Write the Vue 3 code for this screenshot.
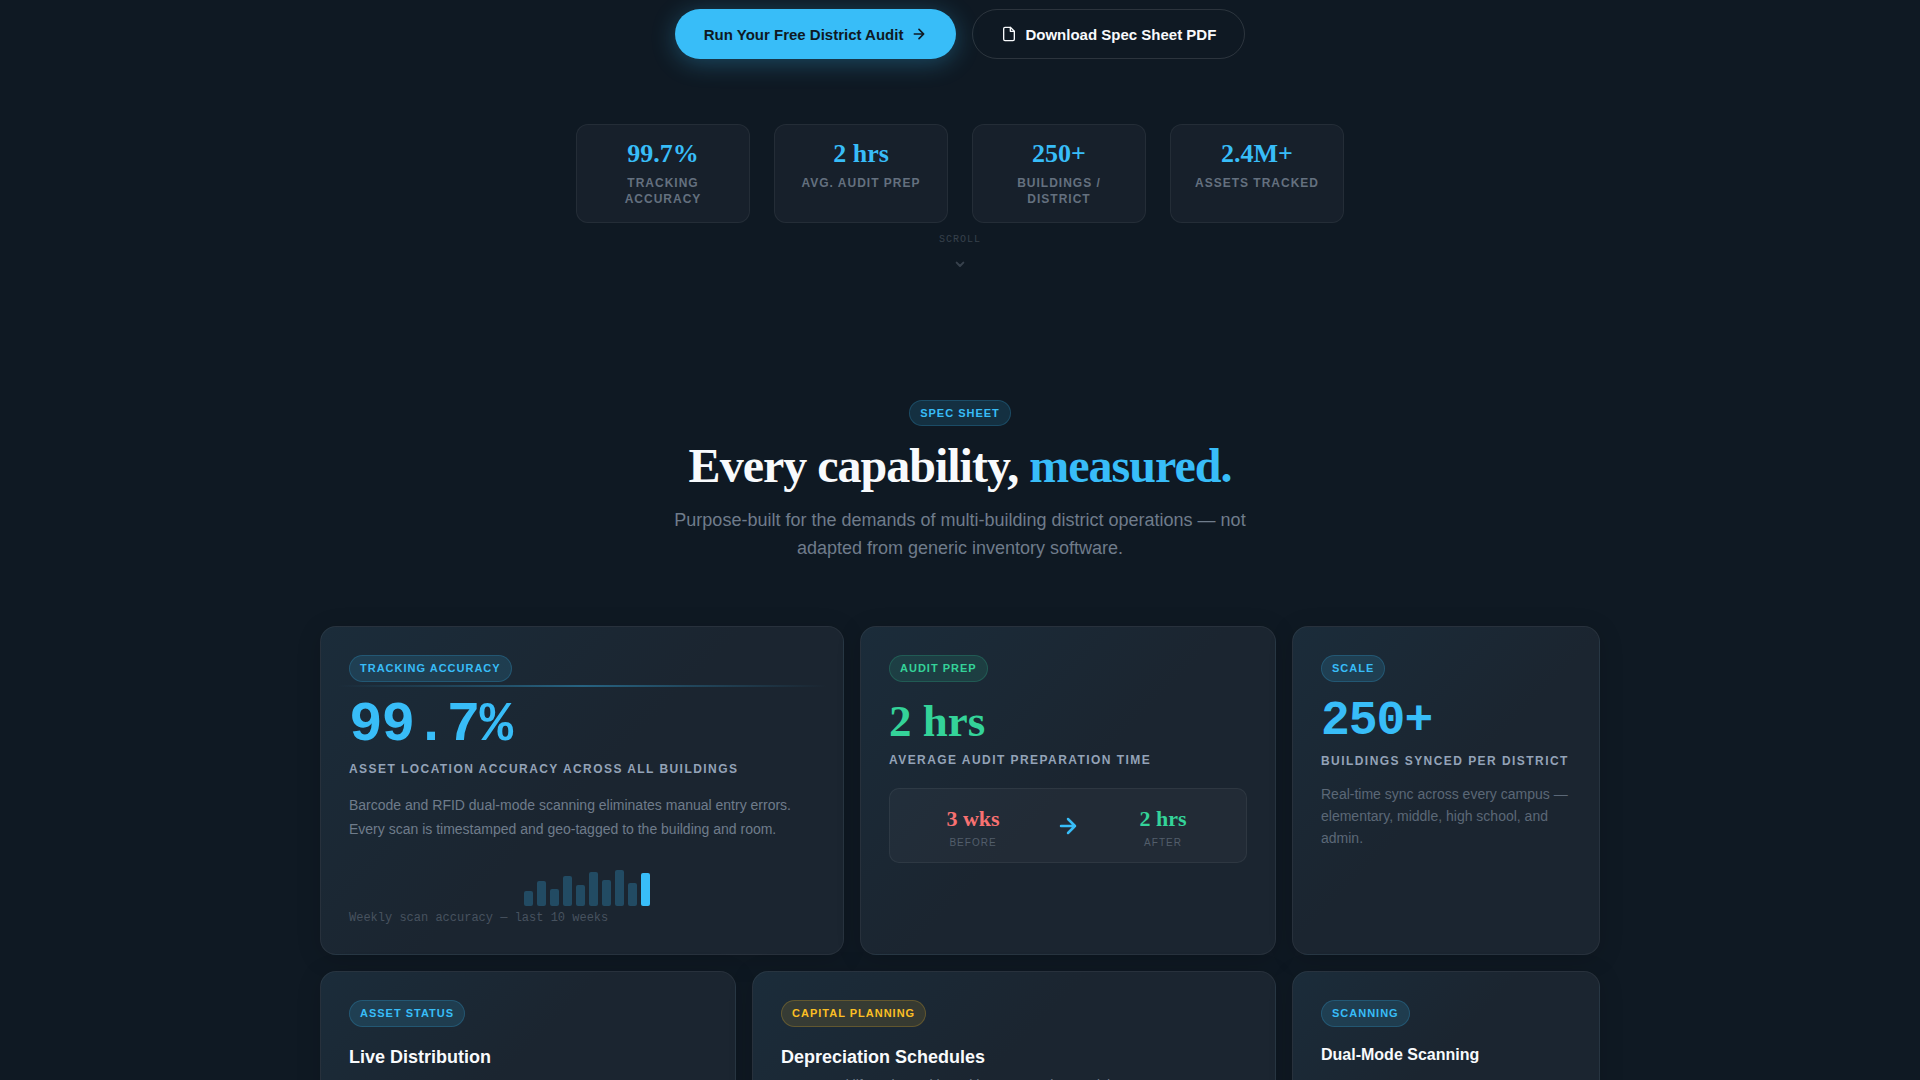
<script setup>
const stats = [
  { value: '99.7%', label: 'Tracking Accuracy' },
  { value: '2 hrs', label: 'Avg. Audit Prep' },
  { value: '250+', label: 'Buildings / District' },
  { value: '2.4M+', label: 'Assets Tracked' },
]

// Weekly scan accuracy bars, heights in px
const weeks = [15, 25, 17, 30, 21, 34, 26, 36, 23, 33]
</script>

<template>
  <main class="page">
    <section class="hero">
      <div class="actions">
        <button type="button" class="btn btn-primary">
          Run Your Free District Audit
          <svg width="16" height="16" viewBox="0 0 24 24" fill="none" stroke="currentColor" stroke-width="2.5" stroke-linecap="round" stroke-linejoin="round" aria-hidden="true"><path d="M5 12h14M12 5l7 7-7 7" /></svg>
        </button>
        <button type="button" class="btn btn-ghost">
          <svg width="16" height="16" viewBox="0 0 24 24" fill="none" stroke="currentColor" stroke-width="2" stroke-linecap="round" stroke-linejoin="round" aria-hidden="true"><path d="M14 2H6a2 2 0 0 0-2 2v16a2 2 0 0 0 2 2h12a2 2 0 0 0 2-2V8z" /><path d="M14 2v6h6" /></svg>
          Download Spec Sheet PDF
        </button>
      </div>

      <div class="stats">
        <div v-for="s in stats" :key="s.label" class="stat">
          <div class="stat-value">{{ s.value }}</div>
          <div class="stat-label">{{ s.label }}</div>
        </div>
      </div>

      <div class="scroll-hint">
        <span>Scroll</span>
        <svg width="16" height="16" viewBox="0 0 24 24" fill="none" stroke="currentColor" stroke-width="3" stroke-linecap="round" stroke-linejoin="round" aria-hidden="true"><path d="M7 10l5 5 5-5" /></svg>
      </div>
    </section>

    <section class="spec">
      <header class="spec-head">
        <span class="badge">Spec Sheet</span>
        <h2>Every capability, <span class="accent">measured.</span></h2>
        <p>Purpose-built for the demands of multi-building district operations — not adapted from generic inventory software.</p>
      </header>

      <div class="grid">
        <article class="card span-5">
          <div class="scan-line"></div>
          <span class="badge">Tracking Accuracy</span>
          <div class="figure figure-xl">99.7%</div>
          <div class="figure-label">Asset location accuracy across all buildings</div>
          <p class="copy">Barcode and RFID dual-mode scanning eliminates manual entry errors. Every scan is timestamped and geo-tagged to the building and room.</p>
          <div class="bars">
            <span v-for="(h, i) in weeks" :key="i" class="bar" :class="{ current: i === weeks.length - 1 }" :style="{ height: h + 'px' }"></span>
          </div>
          <div class="caption">Weekly scan accuracy — last 10 weeks</div>
        </article>

        <article class="card span-4">
          <span class="badge badge-green">Audit Prep</span>
          <div class="figure figure-serif">2 hrs</div>
          <div class="figure-label">Average audit preparation time</div>
          <div class="compare">
            <div class="side">
              <div class="side-value before">3 wks</div>
              <div class="side-label">Before</div>
            </div>
            <svg class="arrow" width="24" height="24" viewBox="0 0 24 24" fill="none" stroke="currentColor" stroke-width="2.5" stroke-linecap="round" stroke-linejoin="round" aria-hidden="true"><path d="M5 12h14M12 5l7 7-7 7" /></svg>
            <div class="side">
              <div class="side-value after">2 hrs</div>
              <div class="side-label">After</div>
            </div>
          </div>
        </article>

        <article class="card span-3">
          <span class="badge">Scale</span>
          <div class="figure figure-lg">250+</div>
          <div class="figure-label">Buildings synced per district</div>
          <p class="note">Real-time sync across every campus — elementary, middle, high school, and admin.</p>
        </article>

        <article class="card span-4">
          <span class="badge">Asset Status</span>
          <h3>Live Distribution</h3>
        </article>

        <article class="card span-5">
          <span class="badge badge-amber">Capital Planning</span>
          <h3>Depreciation Schedules</h3>
          <p class="lead">Automated lifecycle tracking with no manual spreadsheets.</p>
        </article>

        <article class="card span-3">
          <span class="badge">Scanning</span>
          <h3 class="small">Dual-Mode Scanning</h3>
        </article>
      </div>
    </section>
  </main>
</template>

<style>
html,
body {
  background: #0f1923;
}
body {
  height: 100vh;
  overflow: hidden;
}
</style>

<style scoped>
.page {
  height: 100vh;
  overflow: hidden;
  box-sizing: border-box;
  padding: 9px 24px 0;
  background: #0f1923;
  color: #f8fafc;
  font-family: "Liberation Sans", Arial, sans-serif;
}
.page * {
  box-sizing: border-box;
}
.hero {
  display: flex;
  flex-direction: column;
  align-items: center;
}
.actions {
  display: flex;
  gap: 16px;
}
.btn {
  display: inline-flex;
  align-items: center;
  gap: 8px;
  height: 50px;
  padding: 0 28px;
  border: 1px solid transparent;
  border-radius: 25px;
  font-family: inherit;
  font-size: 15px;
  font-weight: 700;
  cursor: pointer;
}
.btn-primary {
  background: #38bdf8;
  color: #0f1923;
  box-shadow: 0 4px 24px rgba(56, 189, 248, 0.3);
}
.btn-ghost {
  background: transparent;
  border-color: rgba(255, 255, 255, 0.12);
  color: #f8fafc;
}
.stats {
  display: grid;
  grid-template-columns: repeat(4, 1fr);
  gap: 24px;
  width: 100%;
  max-width: 768px;
  margin-top: 65px;
}
.stat {
  padding: 14px 16px 15px;
  border: 1px solid rgba(255, 255, 255, 0.06);
  border-radius: 12px;
  background: #17202b;
  text-align: center;
}
.stat-value {
  color: #38bdf8;
  font-family: "Liberation Serif", "Times New Roman", serif;
  font-size: 26px;
  font-weight: 700;
  line-height: 30px;
}
.stat-label {
  margin-top: 6px;
  color: #64707f;
  font-size: 12px;
  font-weight: 700;
  letter-spacing: 1px;
  line-height: 16px;
  text-transform: uppercase;
}
.scroll-hint {
  display: flex;
  flex-direction: column;
  align-items: center;
  gap: 10px;
  margin-top: 11px;
  color: #37414c;
  font-family: "Liberation Mono", "Courier New", monospace;
  font-size: 10px;
  letter-spacing: 1px;
  line-height: 12px;
  text-transform: uppercase;
}
.spec {
  max-width: 1280px;
  margin: 128px auto 0;
}
.spec-head {
  display: flex;
  flex-direction: column;
  align-items: center;
  margin-bottom: 64px;
  text-align: center;
}
.badge {
  display: inline-block;
  padding: 0 10px;
  border: 1px solid rgba(56, 189, 248, 0.2);
  border-radius: 13px;
  background: rgba(56, 189, 248, 0.14);
  color: #38bdf8;
  font-size: 11px;
  font-weight: 700;
  letter-spacing: 1px;
  line-height: 24px;
  text-transform: uppercase;
}
.badge-green {
  border-color: rgba(52, 211, 153, 0.2);
  background: rgba(52, 211, 153, 0.12);
  color: #34d399;
}
.badge-amber {
  border-color: rgba(251, 191, 36, 0.22);
  background: rgba(251, 191, 36, 0.12);
  color: #fbbf24;
}
h2 {
  margin: 12px 0 0;
  font-family: "Liberation Serif", "Times New Roman", serif;
  font-size: 48px;
  font-weight: 700;
  letter-spacing: -1px;
  line-height: 56px;
}
.accent {
  color: #38bdf8;
}
.spec-head p {
  max-width: 600px;
  margin: 12px 0 0;
  color: #6f7c8b;
  font-size: 18px;
  line-height: 28px;
}
.grid {
  display: grid;
  grid-template-columns: repeat(12, 1fr);
  gap: 16px;
}
.card {
  position: relative;
  padding: 28px;
  border: 1px solid rgba(255, 255, 255, 0.06);
  border-radius: 16px;
  background: linear-gradient(135deg, #1b2c3a 0%, #1b2530 50%);
  box-shadow: 0 4px 24px rgba(0, 0, 0, 0.15);
}
.card .badge {
  line-height: 25px;
  border-radius: 14px;
}
.span-3 {
  grid-column: span 3;
}
.span-4 {
  grid-column: span 4;
}
.span-5 {
  grid-column: span 5;
}
.scan-line {
  position: absolute;
  top: 58px;
  left: 16px;
  right: 16px;
  height: 2px;
  background: linear-gradient(90deg, transparent, #38bdf8, transparent);
  opacity: 0.4;
}
.figure {
  color: #38bdf8;
  font-family: "Liberation Mono", "Courier New", monospace;
  font-weight: 700;
  letter-spacing: -1px;
}
.figure-xl {
  margin-top: 15px;
  font-size: 56px;
  line-height: 56px;
}
.figure-lg {
  margin-top: 15px;
  font-size: 48px;
  line-height: 48px;
}
.figure-serif {
  margin-top: 16px;
  color: #34d399;
  font-family: "Liberation Serif", "Times New Roman", serif;
  font-size: 45px;
  letter-spacing: 0;
  line-height: 46px;
}
.figure-label {
  margin-top: 8px;
  color: #94a3b8;
  font-size: 12px;
  font-weight: 700;
  letter-spacing: 0.12em;
  line-height: 16px;
  text-transform: uppercase;
  white-space: nowrap;
}
.copy {
  margin: 16px 0 0;
  color: #6f7c8b;
  font-size: 14px;
  line-height: 24px;
}
.bars {
  display: flex;
  justify-content: center;
  align-items: flex-end;
  gap: 4px;
  height: 40px;
  margin-top: 25px;
  padding-left: 10px;
}
.bar {
  width: 9px;
  border-radius: 2px;
  background: #224b63;
}
.bar.current {
  background: #38bdf8;
}
.caption {
  margin-top: 4px;
  color: #47525f;
  font-family: "Liberation Mono", "Courier New", monospace;
  font-size: 12px;
  line-height: 16px;
}
.compare {
  display: flex;
  align-items: center;
  gap: 16px;
  margin-top: 20px;
  padding: 12px 16px;
  border: 1px solid rgba(255, 255, 255, 0.06);
  border-radius: 10px;
  background: rgba(255, 255, 255, 0.03);
}
.side {
  flex: 1;
  text-align: center;
}
.side-value {
  font-family: "Liberation Serif", "Times New Roman", serif;
  font-size: 22px;
  font-weight: 700;
  line-height: 35px;
}
.before {
  color: #f87171;
}
.after {
  color: #34d399;
}
.side-label {
  color: #525e6b;
  font-size: 10px;
  letter-spacing: 1px;
  line-height: 14px;
  text-transform: uppercase;
}
.arrow {
  flex: none;
  color: #38bdf8;
}
.note {
  margin: 14px 0 0;
  color: #5b6877;
  font-size: 14px;
  line-height: 22px;
}
h3 {
  margin: 20px 0 0;
  font-size: 18px;
  font-weight: 700;
  line-height: 20px;
}
h3.small {
  margin-top: 18px;
  font-size: 16px;
}
.lead {
  margin: 6px 0 0;
  color: #6f7c8b;
  font-size: 14px;
  line-height: 24px;
}
</style>
